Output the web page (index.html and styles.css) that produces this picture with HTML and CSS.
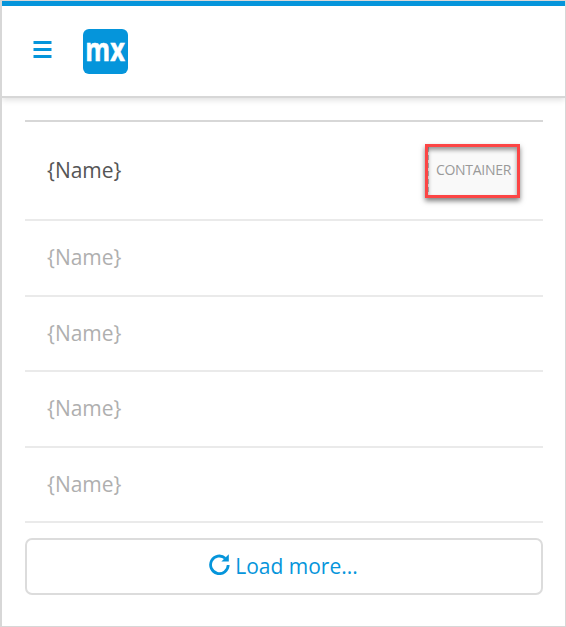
FILE: index.html
```
<!DOCTYPE html>
<html lang="en">
<head>
<meta charset="utf-8">
<title>List</title>
<link rel="stylesheet" href="styles.css">
</head>
<body>
<div class="page">
  <header class="topbar">
    <svg class="menu" width="19" height="18" viewBox="0 0 19 18"><path d="M0.5 0h18v3h-18zM0.5 7h18v3h-18zM0.5 14h18v3h-18z"/></svg>
    <svg class="logo" width="45" height="45" viewBox="0 0 45 45">
      <rect width="45" height="45" rx="6"/>
      <text x="2.3" y="31.5" textLength="39.5" lengthAdjust="spacingAndGlyphs">mx</text>
    </svg>
  </header>
  <main class="content">
    <ul class="list">
      <li class="row row-first"><span>{Name}</span><div class="container"><span>CONTAINER</span></div></li>
      <li class="row"><span>{Name}</span></li>
      <li class="row"><span>{Name}</span></li>
      <li class="row"><span>{Name}</span></li>
      <li class="row"><span>{Name}</span></li>
    </ul>
    <button class="more">
      <svg class="refresh" width="21" height="21" viewBox="0 0 21 21"><path class="arc" d="M16.2 4.2A8.8 8.8 0 1 0 19.2 11"/><path class="head" d="M19.8 0.3V7.4H12.4z"/></svg>
      <span>Load more...</span>
    </button>
  </main>
</div>
</body>
</html>
```
FILE: styles.css
```
* { box-sizing: border-box; }
body { margin: 0; font-family: "Open Sans", sans-serif; background: #fff; }
.page {
  height: 627px;
  border: solid #d7d7d7;
  border-width: 1px 1px 1px 2px;
  overflow: hidden;
}
.topbar {
  height: 97px;
  display: flex;
  align-items: flex-start;
  border-top: 5px solid #0595db;
  border-bottom: 2px solid #d7d7d7;
  box-shadow: 0 2px 6px rgba(0, 0, 0, .13);
}
.menu { margin: 35px 0 0 31px; fill: #0595db; }
.logo { margin: 23px 0 0 31px; overflow: visible; }
.logo rect { fill: #0595db; }
.logo text {
  fill: #fff;
  stroke: #fff;
  stroke-width: .6px;
  font: 700 32px/1 "Open Sans", sans-serif;
}
.content { padding: 22px 22px 0 23px; }
.list {
  margin: 0;
  padding: 0;
  list-style: none;
  border-top: 2px solid #d7d7d7;
}
.row {
  height: 75.5px;
  padding: 0 23px 1px 22px;
  display: flex;
  align-items: center;
  justify-content: space-between;
  border-bottom: 2px solid #eaeaea;
  font-size: 21px;
  line-height: 30px;
  color: #afafaf;
}
.row-first { height: 99px; color: #555; }
.container {
  width: 95px;
  height: 54px;
  margin-top: 1px;
  display: flex;
  justify-content: center;
  align-items: center;
  padding: 0 0 1px 2px;
  border: 3px solid #fc4545;
  background: repeating-linear-gradient(#bbb 0 5px, #f9f9f9 5px 8px) 0 0 / 1px 100% no-repeat #f9f9f9;
  box-shadow: 0 3px 5px rgba(0, 0, 0, .5), inset 0 3px 4px rgba(0, 0, 0, .4);
  font-size: 14px;
  letter-spacing: -.3px;
  color: #999;
}
.more {
  width: 100%;
  height: 57px;
  margin-top: 15px;
  padding: 0 1px 2px 0;
  display: flex;
  align-items: center;
  justify-content: center;
  gap: 5px;
  border: 2px solid #dcdcdc;
  border-radius: 7px;
  background: #fff;
  color: #0595db;
  font: 21px/30px "Open Sans", sans-serif;
}
.refresh { margin-top: -2px; }
.arc { fill: none; stroke: #0595db; stroke-width: 2.8; }
.head { fill: #0595db; }
```
